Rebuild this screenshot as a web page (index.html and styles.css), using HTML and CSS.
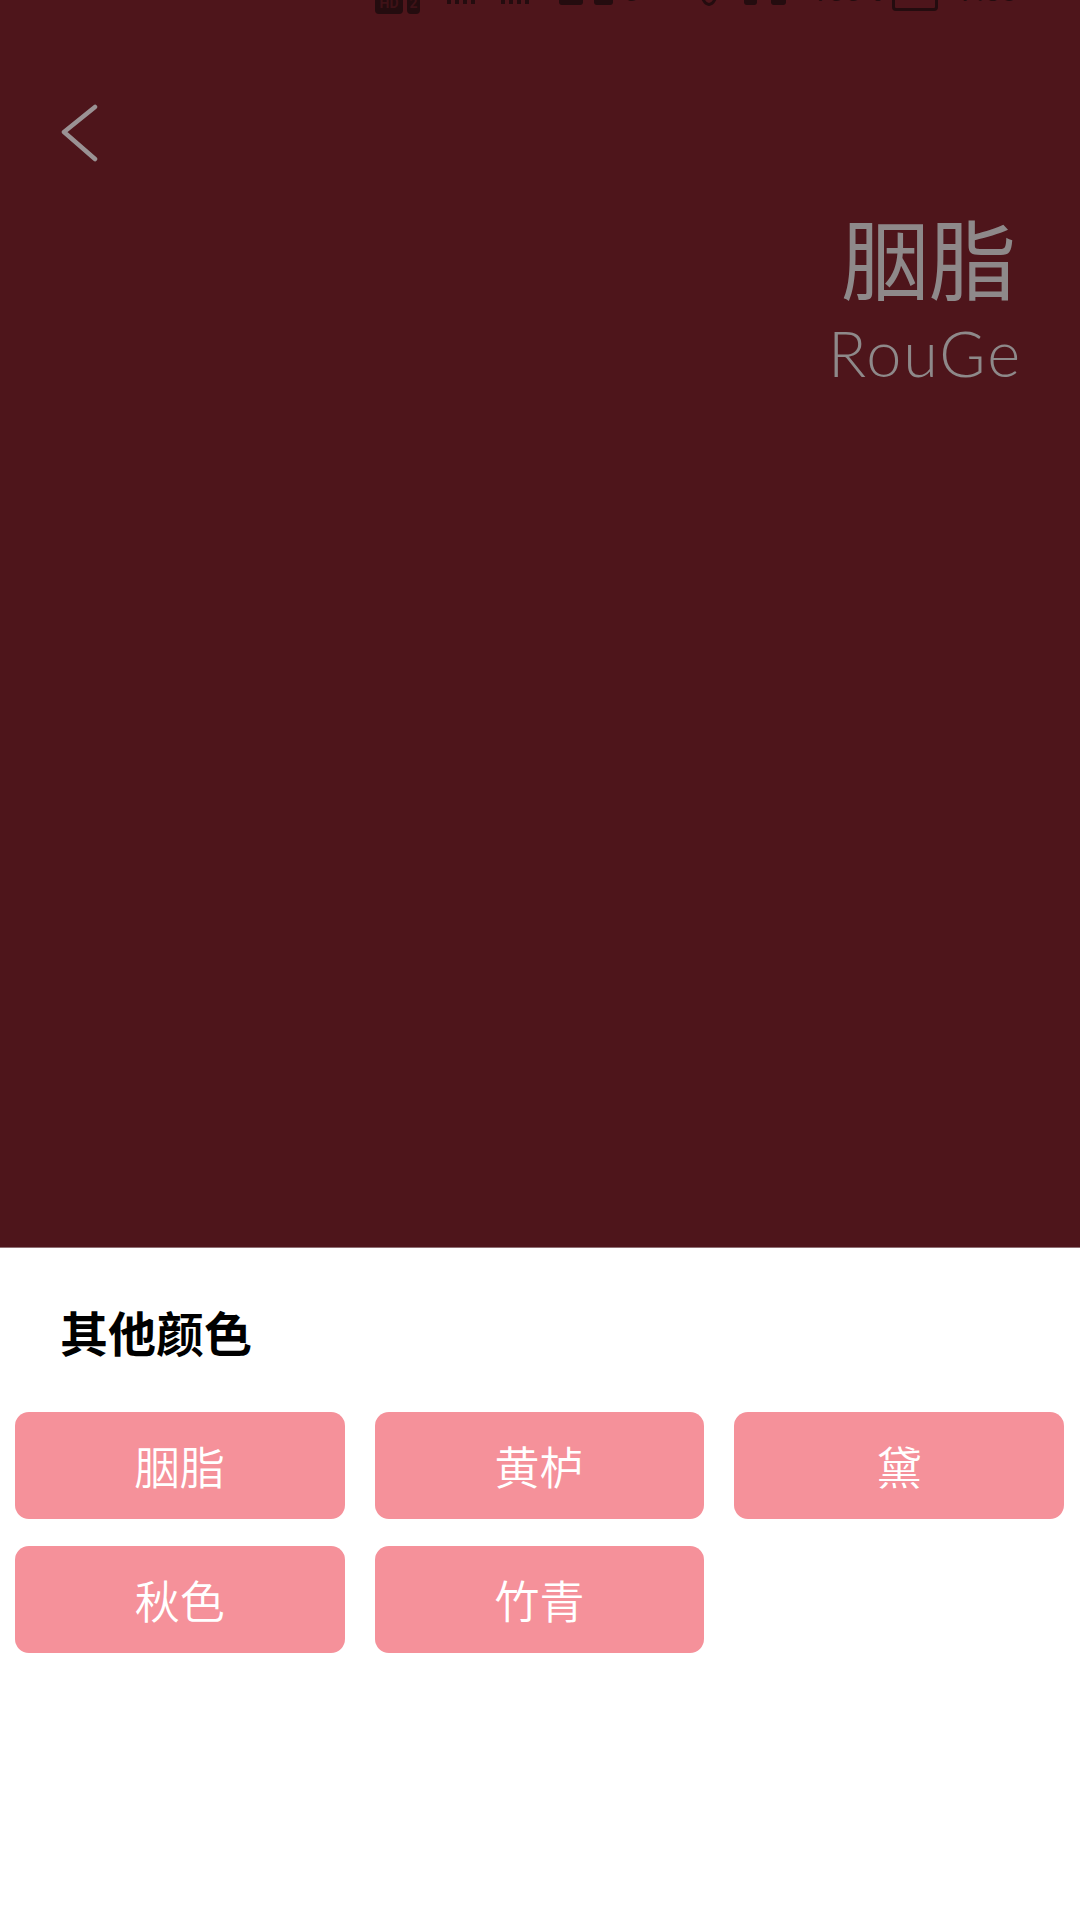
FILE: index.html
```html
<!DOCTYPE html>
<html lang="zh">
<head>
<meta charset="utf-8">
<title>胭脂 RouGe</title>
<link rel="stylesheet" href="styles.css">
</head>
<body>
<div class="page">
  <section class="hero">
    <div class="status">
      <span class="sb-badge sb-hd">HD</span>
      <span class="sb-badge sb-two">2</span>
      <span class="sb-bars sb-b1"><i></i><i></i><i></i><i></i></span>
      <span class="sb-bars sb-b2"><i></i><i></i><i></i><i></i></span>
      <span class="sb-blob sb-w1"></span>
      <span class="sb-blob sb-w2"></span>
      <span class="sb-text sb-t1">0</span>
      <span class="sb-ring"></span>
      <span class="sb-blob sb-w3"></span>
      <span class="sb-blob sb-w4"></span>
      <span class="sb-text sb-pct">100%</span>
      <span class="sb-batt"></span>
      <span class="sb-text sb-time">7:58</span>
    </div>
    <div class="back">
      <svg width="40" height="60" viewBox="0 0 40 60" aria-hidden="true">
        <polyline points="35,3 4,28 35,55" fill="none" stroke="#9a9294" stroke-width="4.5" stroke-linecap="round" stroke-linejoin="round"/>
      </svg>
    </div>
    <div class="title">
      <div class="title-cn">胭脂</div>
      <div class="title-en">RouGe</div>
    </div>
  </section>
  <section class="sheet">
    <h2 class="sheet-title">其他颜色</h2>
    <div class="grid">
      <div class="chip">胭脂</div>
      <div class="chip">黄栌</div>
      <div class="chip">黛</div>
      <div class="chip">秋色</div>
      <div class="chip">竹青</div>
    </div>
  </section>
</div>
</body>
</html>
```

FILE: styles.css
```css
html, body {
  margin: 0;
  padding: 0;
  background: #ffffff;
}
body {
  width: 1080px;
  height: 1920px;
  overflow: hidden;
  font-family: "Noto Sans CJK SC", "Noto Sans", sans-serif;
}
.page {
  display: flex;
  flex-direction: column;
  width: 1080px;
  height: 1920px;
}
.hero {
  height: 1247px;
  background: #4e151b;
  border-bottom: 1px solid #8f6f74;
  display: flex;
  flex-direction: column;
}
.status {
  height: 14px;
  overflow: hidden;
  display: flex;
  align-items: flex-end;
  color: #240c0f;
  font-family: "Roboto", "Liberation Sans", sans-serif;
}
.sb-badge {
  height: 22px;
  background: #240c0f;
  color: #3e1217;
  border-radius: 4px;
  font-size: 14px;
  font-weight: 700;
  line-height: 22px;
  text-align: center;
}
.sb-hd { margin-left: 375px; width: 28px; }
.sb-two { margin-left: 4px; width: 13px; }
.sb-bars {
  display: flex;
  gap: 4px;
  height: 30px;
  margin-bottom: 10px;
}
.sb-bars i {
  width: 4px;
  height: 30px;
  background: #240c0f;
}
.sb-b1 { margin-left: 27px; }
.sb-b2 { margin-left: 26px; }
.sb-blob {
  height: 30px;
  background: #240c0f;
  border-radius: 3px;
  margin-bottom: 9px;
}
.sb-w1 { margin-left: 30px; width: 24px; }
.sb-w2 { margin-left: 11px; width: 19px; }
.sb-text {
  font-size: 30px;
  line-height: 30px;
  margin-bottom: 8px;
  color: #240c0f;
}
.sb-t1 { margin-left: 10px; width: 23px; }
.sb-ring {
  width: 12px;
  height: 24px;
  border: 3px solid #240c0f;
  border-radius: 50%;
  margin-left: 54px;
  margin-bottom: 8px;
}
.sb-w3 { margin-left: 26px; width: 13px; }
.sb-w4 { margin-left: 14px; width: 15px; }
.sb-pct { margin-left: 25px; }
.sb-batt {
  width: 40px;
  height: 26px;
  border: 3px solid #240c0f;
  border-radius: 4px;
  margin-left: 8px;
  margin-bottom: 3px;
}
.sb-time { margin-left: 22px; }
.back {
  margin-top: 90px;
  margin-left: 60px;
  width: 40px;
  height: 60px;
}
.back svg { display: block; }
.title {
  align-self: flex-end;
  margin-right: 62px;
  margin-top: 42px;
  display: flex;
  flex-direction: column;
  align-items: flex-end;
  color: #8e898a;
}
.title-cn {
  font-family: "Noto Sans CJK SC", sans-serif;
  font-size: 87px;
  line-height: 100px;
  margin-right: 2px;
}
.title-en {
  font-family: "Lato", "Open Sans", sans-serif;
  font-weight: 300;
  font-size: 63px;
  line-height: 70px;
  letter-spacing: 2px;
  margin-top: 12px;
  margin-right: -4px;
}
.sheet {
  flex: 1;
  background: #ffffff;
  display: flex;
  flex-direction: column;
  padding: 0 16px 0 15px;
}
.sheet-title {
  margin: 52px 0 0 45px;
  font-family: "Noto Sans CJK SC", sans-serif;
  font-size: 48px;
  line-height: 62px;
  font-weight: 700;
  color: #000000;
}
.grid {
  margin-top: 50px;
  display: grid;
  grid-template-columns: repeat(3, 1fr);
  column-gap: 30px;
  row-gap: 27px;
}
.chip {
  height: 107px;
  background: #f5919a;
  border-radius: 14px;
  color: #ffffff;
  font-family: "Noto Sans CJK SC", sans-serif;
  font-weight: 350;
  font-size: 45px;
  display: flex;
  align-items: center;
  justify-content: center;
}
```
